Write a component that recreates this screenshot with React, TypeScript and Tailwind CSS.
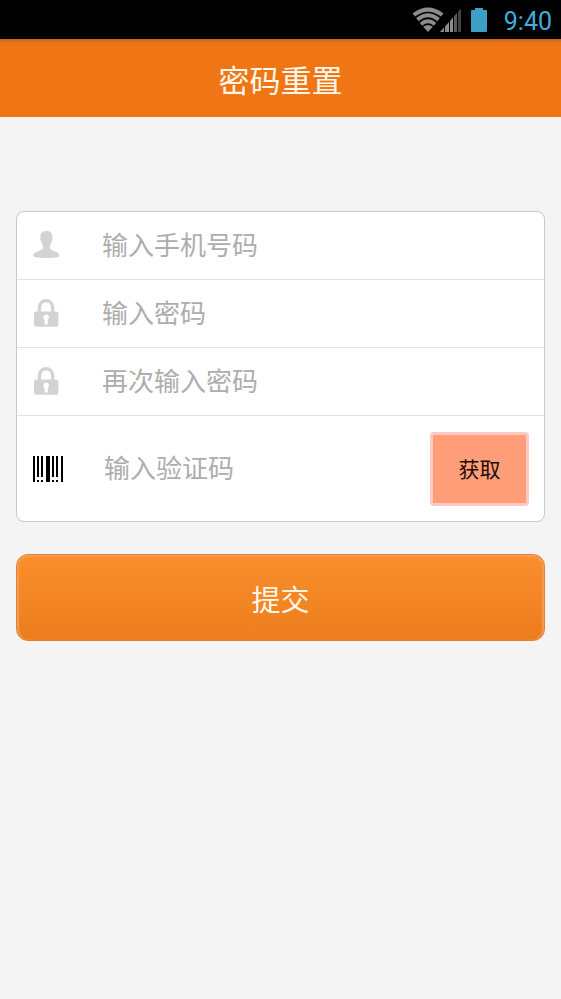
import React from "react";

const font = "font-['Roboto','Noto_Sans_CJK_SC',sans-serif]";

function WifiIcon() {
  return (
    <svg width="32" height="26" viewBox="0 0 32 26" fill="none" stroke="#8c8c8c" strokeWidth="4" aria-hidden="true">
      <path d="M16 25 L11.2 19.8 Q16 16 20.8 19.8 Z" fill="#8c8c8c" stroke="none" />
      <path d="M9 17.2 Q16 11.4 23 17.2" />
      <path d="M5.4 12.6 Q16 4 26.6 12.6" />
      <path d="M1.8 8 Q16 -2.8 30.2 8" />
    </svg>
  );
}

function SignalIcon() {
  return (
    <svg width="22" height="26" viewBox="0 0 22 26" aria-hidden="true">
      <path d="M0 25 L4 20.6 V25 Z" fill="#8c8c8c" />
      <path d="M5 19.5 L9 15 V25 H5 Z" fill="#8c8c8c" />
      <path d="M10 14 L13 10.4 V25 H10 Z" fill="#8c8c8c" />
      <path d="M14 9.2 L17 6 V25 H14 Z" fill="#5c5c5c" />
      <path d="M18 4.8 L21 1.4 V25 H18 Z" fill="#444" />
    </svg>
  );
}

function BatteryIcon() {
  return (
    <svg width="18" height="26" viewBox="0 0 18 26" fill="#3d9fc6" aria-hidden="true">
      <path d="M5 1 H13 V3 H16 Q17 3 17 4 V24 Q17 25 16 25 H2 Q1 25 1 24 V4 Q1 3 2 3 H5 Z" />
    </svg>
  );
}

function UserIcon() {
  return (
    <svg width="28" height="30" viewBox="0 0 28 30" fill="#d3d3d3" aria-hidden="true">
      <path d="M13.4 0 C17.8 0 19.6 2.6 19.2 6.6 C20.1 7.2 19.7 9.8 18.5 10.4 C18.1 12.6 17.2 14 16.8 14.8 V17.4 C18.4 20.2 26.6 19.8 26.6 25.2 C23.6 27.6 3.2 27.6 0.2 25.2 C0.2 19.8 8.4 20.2 10 17.4 V14.8 C9.6 14 8.7 12.6 8.3 10.4 C7.1 9.8 6.7 7.2 7.6 6.6 C7.2 2.6 9 0 13.4 0 Z" />
    </svg>
  );
}

function LockIcon() {
  return (
    <svg width="28" height="30" viewBox="0 0 28 30" aria-hidden="true">
      <path d="M6.4 13 V8.8 C6.4 -0.6 19.6 -0.6 19.6 8.8 V13" fill="none" stroke="#d3d3d3" strokeWidth="3.4" />
      <rect x="1" y="12.5" width="24.4" height="15.3" rx="2.4" fill="#d3d3d3" />
      <path d="M13.2 15.6 a2.9 2.9 0 0 1 1.6 5.3 V25.5 H11.6 V20.9 A2.9 2.9 0 0 1 13.2 15.6 Z" fill="#fff" />
    </svg>
  );
}

function BarcodeIcon() {
  return (
    <svg width="30" height="26" viewBox="0 0 30 26" fill="#000" shapeRendering="crispEdges" aria-hidden="true">
      <path d="M0 0h2v26h-2z M4 0h2v21h-2z M8 0h2v21h-2z M13 0h4v26h-4z M19 0h2v21h-2z M23 0h2v21h-2z M28 0h2v26h-2z" />
      <path d="M4 24h2v2h-2z M8 24h2v2h-2z M19 24h2v2h-2z M23 24h2v2h-2z" />
    </svg>
  );
}

type FieldProps = {
  id: string;
  label: string;
  type: string;
  icon: React.ReactNode;
};

function Field({ id, label, type, icon }: FieldProps) {
  return (
    <div className="flex h-[68px] items-center border-b border-[#e2e2e2] px-4">
      <label htmlFor={id} aria-label={label} className="w-[69px] shrink-0">
        {icon}
      </label>
      <input
        id={id}
        type={type}
        placeholder={label}
        className="h-10 min-w-0 flex-1 bg-transparent text-[26px] text-[#333] outline-none placeholder:text-[#adadad]"
      />
    </div>
  );
}

export default function App() {
  return (
    <div className={`flex min-h-screen flex-col bg-[#f4f4f4] ${font}`}>
      <div className="flex h-[39px] items-center justify-end bg-black pr-[9px]">
        <span className="-mr-1">
          <WifiIcon />
        </span>
        <SignalIcon />
        <span className="mr-4 ml-2">
          <BatteryIcon />
        </span>
        <span className="pt-1 text-[25px] leading-8 text-[#40addb]">9:40</span>
      </div>
      <header className="flex h-[78px] items-center justify-center bg-linear-to-b from-[#c4651c] to-[#f07514] to-[4px] pt-1">
        <h1 className="pt-1 text-[31px] leading-10 text-[#fff8ea]">密码重置</h1>
      </header>
      <form className="px-4 pt-[94px]" onSubmit={(e) => e.preventDefault()}>
        <div className="rounded-lg border border-[#c9c9c9] bg-white">
          <Field id="phone" label="输入手机号码" type="tel" icon={<UserIcon />} />
          <Field id="password" label="输入密码" type="password" icon={<LockIcon />} />
          <Field id="confirm" label="再次输入密码" type="password" icon={<LockIcon />} />
          <div className="flex h-[105px] items-center pr-[15px] pl-4">
            <label htmlFor="code" aria-label="输入验证码" className="w-[71px] shrink-0">
              <BarcodeIcon />
            </label>
            <input
              id="code"
              type="text"
              placeholder="输入验证码"
              className="h-10 min-w-0 flex-1 bg-transparent text-[26px] text-[#333] outline-none placeholder:text-[#adadad]"
            />
            <button
              type="button"
              className="h-[74px] w-[99px] shrink-0 rounded border-3 border-[#ffc9c2] bg-[#ff9e78] pt-1 text-[21px] text-[#1c0c06]"
            >
              获取
            </button>
          </div>
        </div>
        <button
          type="submit"
          className="mt-8 h-[87px] w-full rounded-xl border border-[#e0813a] bg-linear-to-b from-[#fb8f2c] to-[#ec7d1c] pt-2 text-[29px] text-[#fff8ea] shadow-[inset_0_2px_2px_#fba052,inset_2px_0_1px_#f59a55,inset_-2px_0_1px_#f59a55]"
        >
          提交
        </button>
      </form>
    </div>
  );
}
